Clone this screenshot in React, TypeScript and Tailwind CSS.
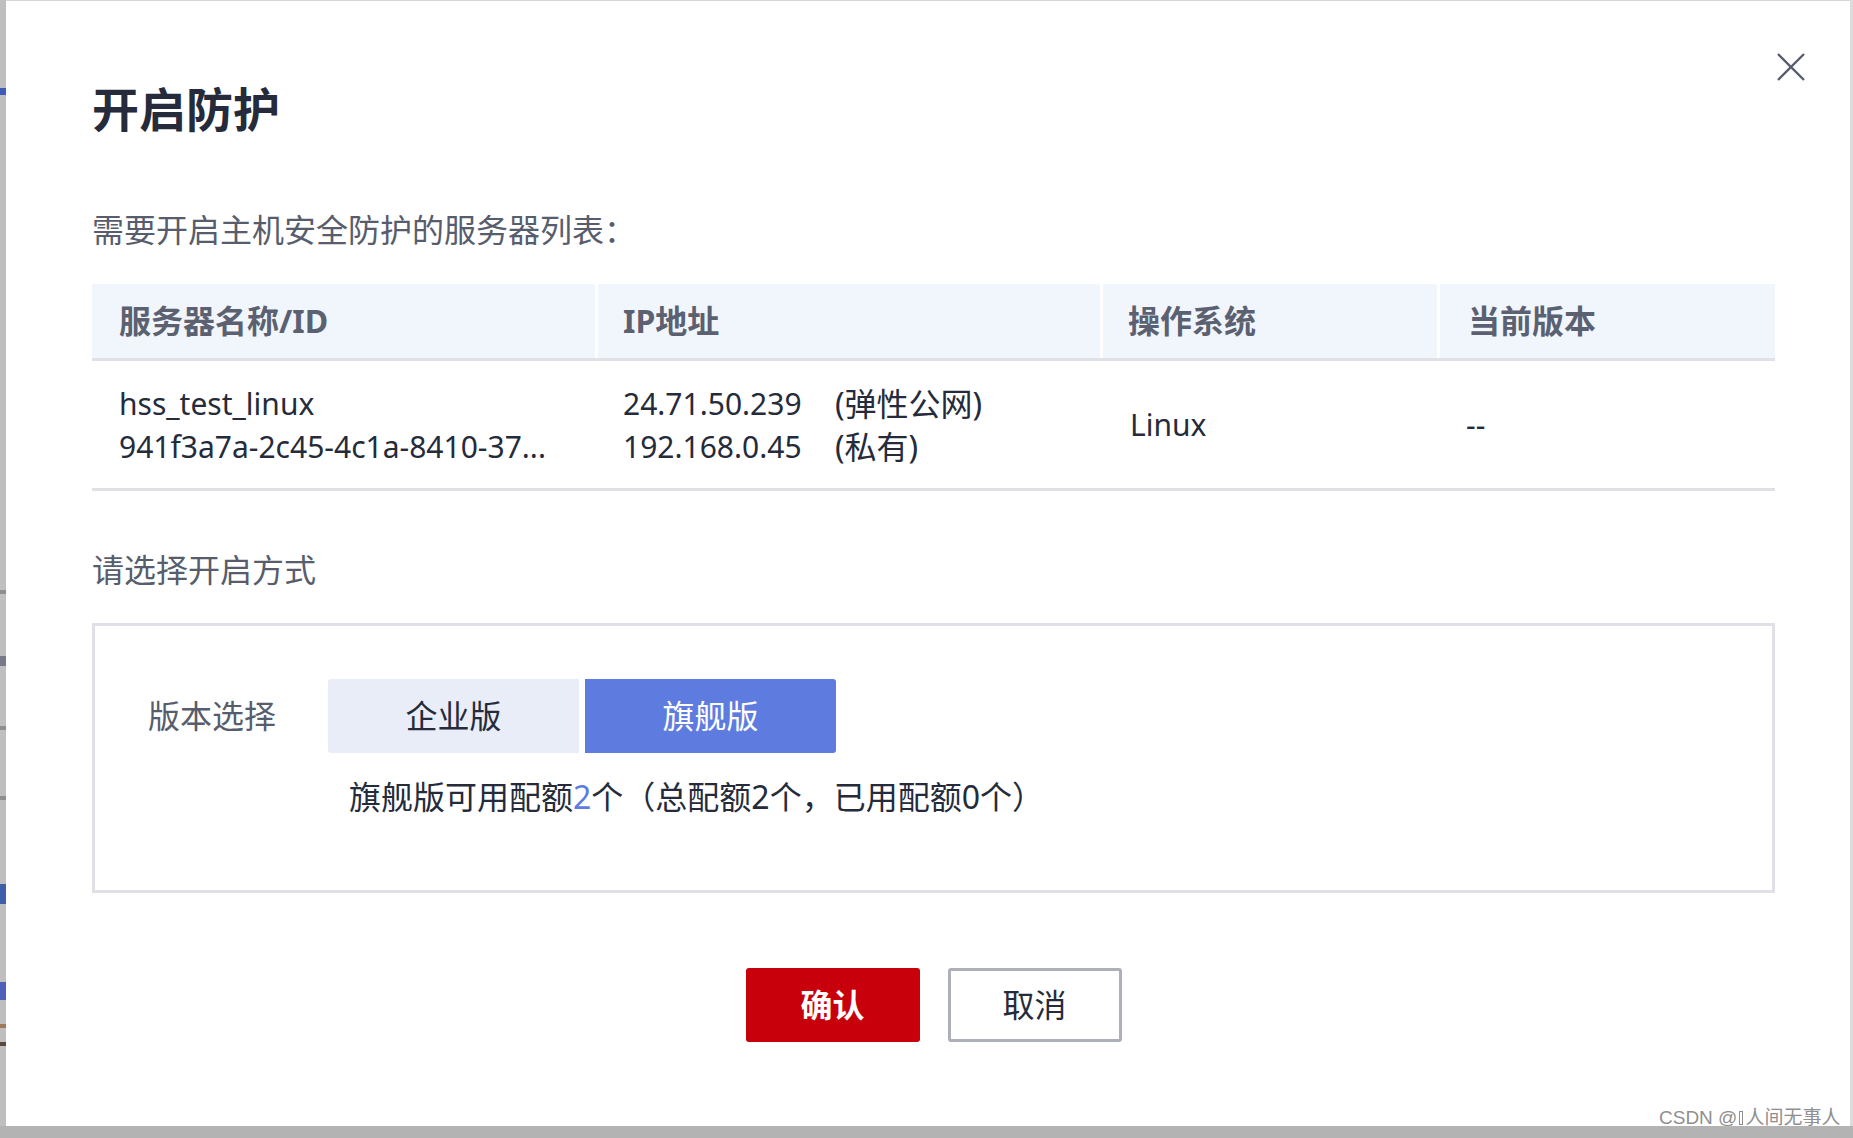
import React from "react";

function CloseIcon() {
  return (
    <svg width="28" height="28" viewBox="0 0 28 28" fill="none">
      <path d="M1 1 L27 27 M27 1 L1 27" stroke="#575d6c" strokeWidth="2.4" />
    </svg>
  );
}

function LeftStrip() {
  return (
    <div className="w-[6px] bg-[#bfbfbf] flex flex-col">
      <div className="h-[88px]" />
      <div className="h-[7px] bg-[#3d5bb8]" />
      <div className="h-[495px]" />
      <div className="h-[4px] bg-[#8e8e8e]" />
      <div className="h-[62px]" />
      <div className="h-[10px] bg-[#777b88]" />
      <div className="h-[60px]" />
      <div className="h-[4px] bg-[#8e8e8e]" />
      <div className="h-[66px]" />
      <div className="h-[4px] bg-[#8e8e8e]" />
      <div className="h-[84px]" />
      <div className="h-[20px] bg-[#3f5fa8]" />
      <div className="h-[78px]" />
      <div className="h-[18px] bg-[#5060b8]" />
      <div className="h-[24px]" />
      <div className="h-[4px] bg-[#a0785a]" />
      <div className="h-[14px]" />
      <div className="h-[4px] bg-[#5a4a3a]" />
    </div>
  );
}

export default function App() {
  return (
    <div className="relative w-[1853px] h-[1138px] overflow-hidden bg-[#b4b4b4] flex flex-col font-['Noto_Sans','Noto_Sans_CJK_SC',sans-serif]">
      <div className="flex h-[1126px]">
        <LeftStrip />
        <div className="relative flex-1 bg-white border-t border-[#d4d4d4] pl-[86px] pr-[75px] flex flex-col">
          <button className="absolute left-[1771px] top-[52px] w-[28px] h-[28px]">
            <CloseIcon />
          </button>

          <div className="mt-[82px] h-[52px] leading-[52px] text-[47px] font-bold text-[#252b3a]">
            开启防护
          </div>

          <div className="mt-[75px] h-[40px] leading-[40px] text-[32px] text-[#575d6c]">
            需要开启主机安全防护的服务器列表：
          </div>

          <div className="mt-[34px] flex flex-col">
            <div className="flex h-[77px] bg-[#f1f5fc] border-b-[3px] border-[#dfe1e6] text-[32px] font-bold text-[#5b6170]">
              <div className="w-[503px] pl-[27px] flex items-center">服务器名称/ID</div>
              <div className="w-[505px] pl-[25px] flex items-center border-l-[3px] border-white">IP地址</div>
              <div className="w-[337px] pl-[25px] flex items-center border-l-[3px] border-white">操作系统</div>
              <div className="flex-1 pl-[28px] flex items-center border-l-[3px] border-white">当前版本</div>
            </div>
            <div className="flex h-[130px] border-b-[3px] border-[#dfe1e6] text-[#252b3a]">
              <div className="w-[503px] pl-[27px] flex flex-col justify-center text-[30px] leading-[43px]">
                <div>hss_test_linux</div>
                <div className="whitespace-nowrap">941f3a7a-2c45-4c1a-8410-37...</div>
              </div>
              <div className="w-[505px] pl-[28px] flex flex-col justify-center leading-[43px]">
                <div className="flex items-center whitespace-nowrap">
                  <span className="w-[212px] text-[30px]">24.71.50.239</span>
                  <span className="text-[32px]">(弹性公网)</span>
                </div>
                <div className="flex items-center whitespace-nowrap">
                  <span className="w-[212px] text-[30px]">192.168.0.45</span>
                  <span className="text-[32px]">(私有)</span>
                </div>
              </div>
              <div className="w-[337px] pl-[30px] flex items-center text-[30px]">Linux</div>
              <div className="flex-1 pl-[29px] flex items-center text-[30px]">--</div>
            </div>
          </div>

          <div className="mt-[59px] h-[40px] leading-[40px] text-[32px] text-[#575d6c]">
            请选择开启方式
          </div>

          <div className="mt-[33px] h-[270px] border-[3px] border-[#dfe1e6] flex flex-col">
            <div className="mt-[53px] flex items-center">
              <div className="w-[233px] pl-[53px] text-[32px] text-[#575d6c]">版本选择</div>
              <div className="flex gap-[6px]">
                <div className="w-[251px] h-[74px] flex items-center justify-center bg-[#e9edf8] rounded-l-[3px] text-[32px] text-[#252b3a]">
                  企业版
                </div>
                <div className="w-[251px] h-[74px] flex items-center justify-center bg-[#5e7ce0] rounded-r-[3px] text-[32px] text-white">
                  旗舰版
                </div>
              </div>
            </div>
            <div className="mt-[24px] h-[40px] leading-[40px] pl-[254px] text-[32px] text-[#252b3a] whitespace-nowrap">
              旗舰版可用配额<span className="text-[#5e7ce0]">2</span>个（总配额2个，已用配额0个）
            </div>
          </div>

          <div className="mt-[75px] flex justify-center gap-[28px]">
            <button className="w-[174px] h-[74px] bg-[#c7000b] rounded-[3px] text-[32px] font-bold text-white">
              确认
            </button>
            <button className="w-[174px] h-[74px] bg-white border-[3px] border-[#adb0b8] rounded-[3px] text-[32px] text-[#252b3a]">
              取消
            </button>
          </div>
        </div>
        <div className="w-[3px] bg-[#dcdcdc]" />
      </div>
      <div className="h-[12px] bg-[#b3b3b3]" />

      <div className="absolute left-[1659px] top-[1106px] text-[19px] leading-[24px] text-[#8f8f8f] whitespace-nowrap font-['Liberation_Sans','Noto_Sans_CJK_SC',sans-serif] [text-shadow:0_0_1px_#ffffff]">
        CSDN @<span className="inline-block w-[4px] h-[14px] border border-[#8f8f8f] mx-[2px] align-[-1px]" />人间无事人
      </div>
    </div>
  );
}
